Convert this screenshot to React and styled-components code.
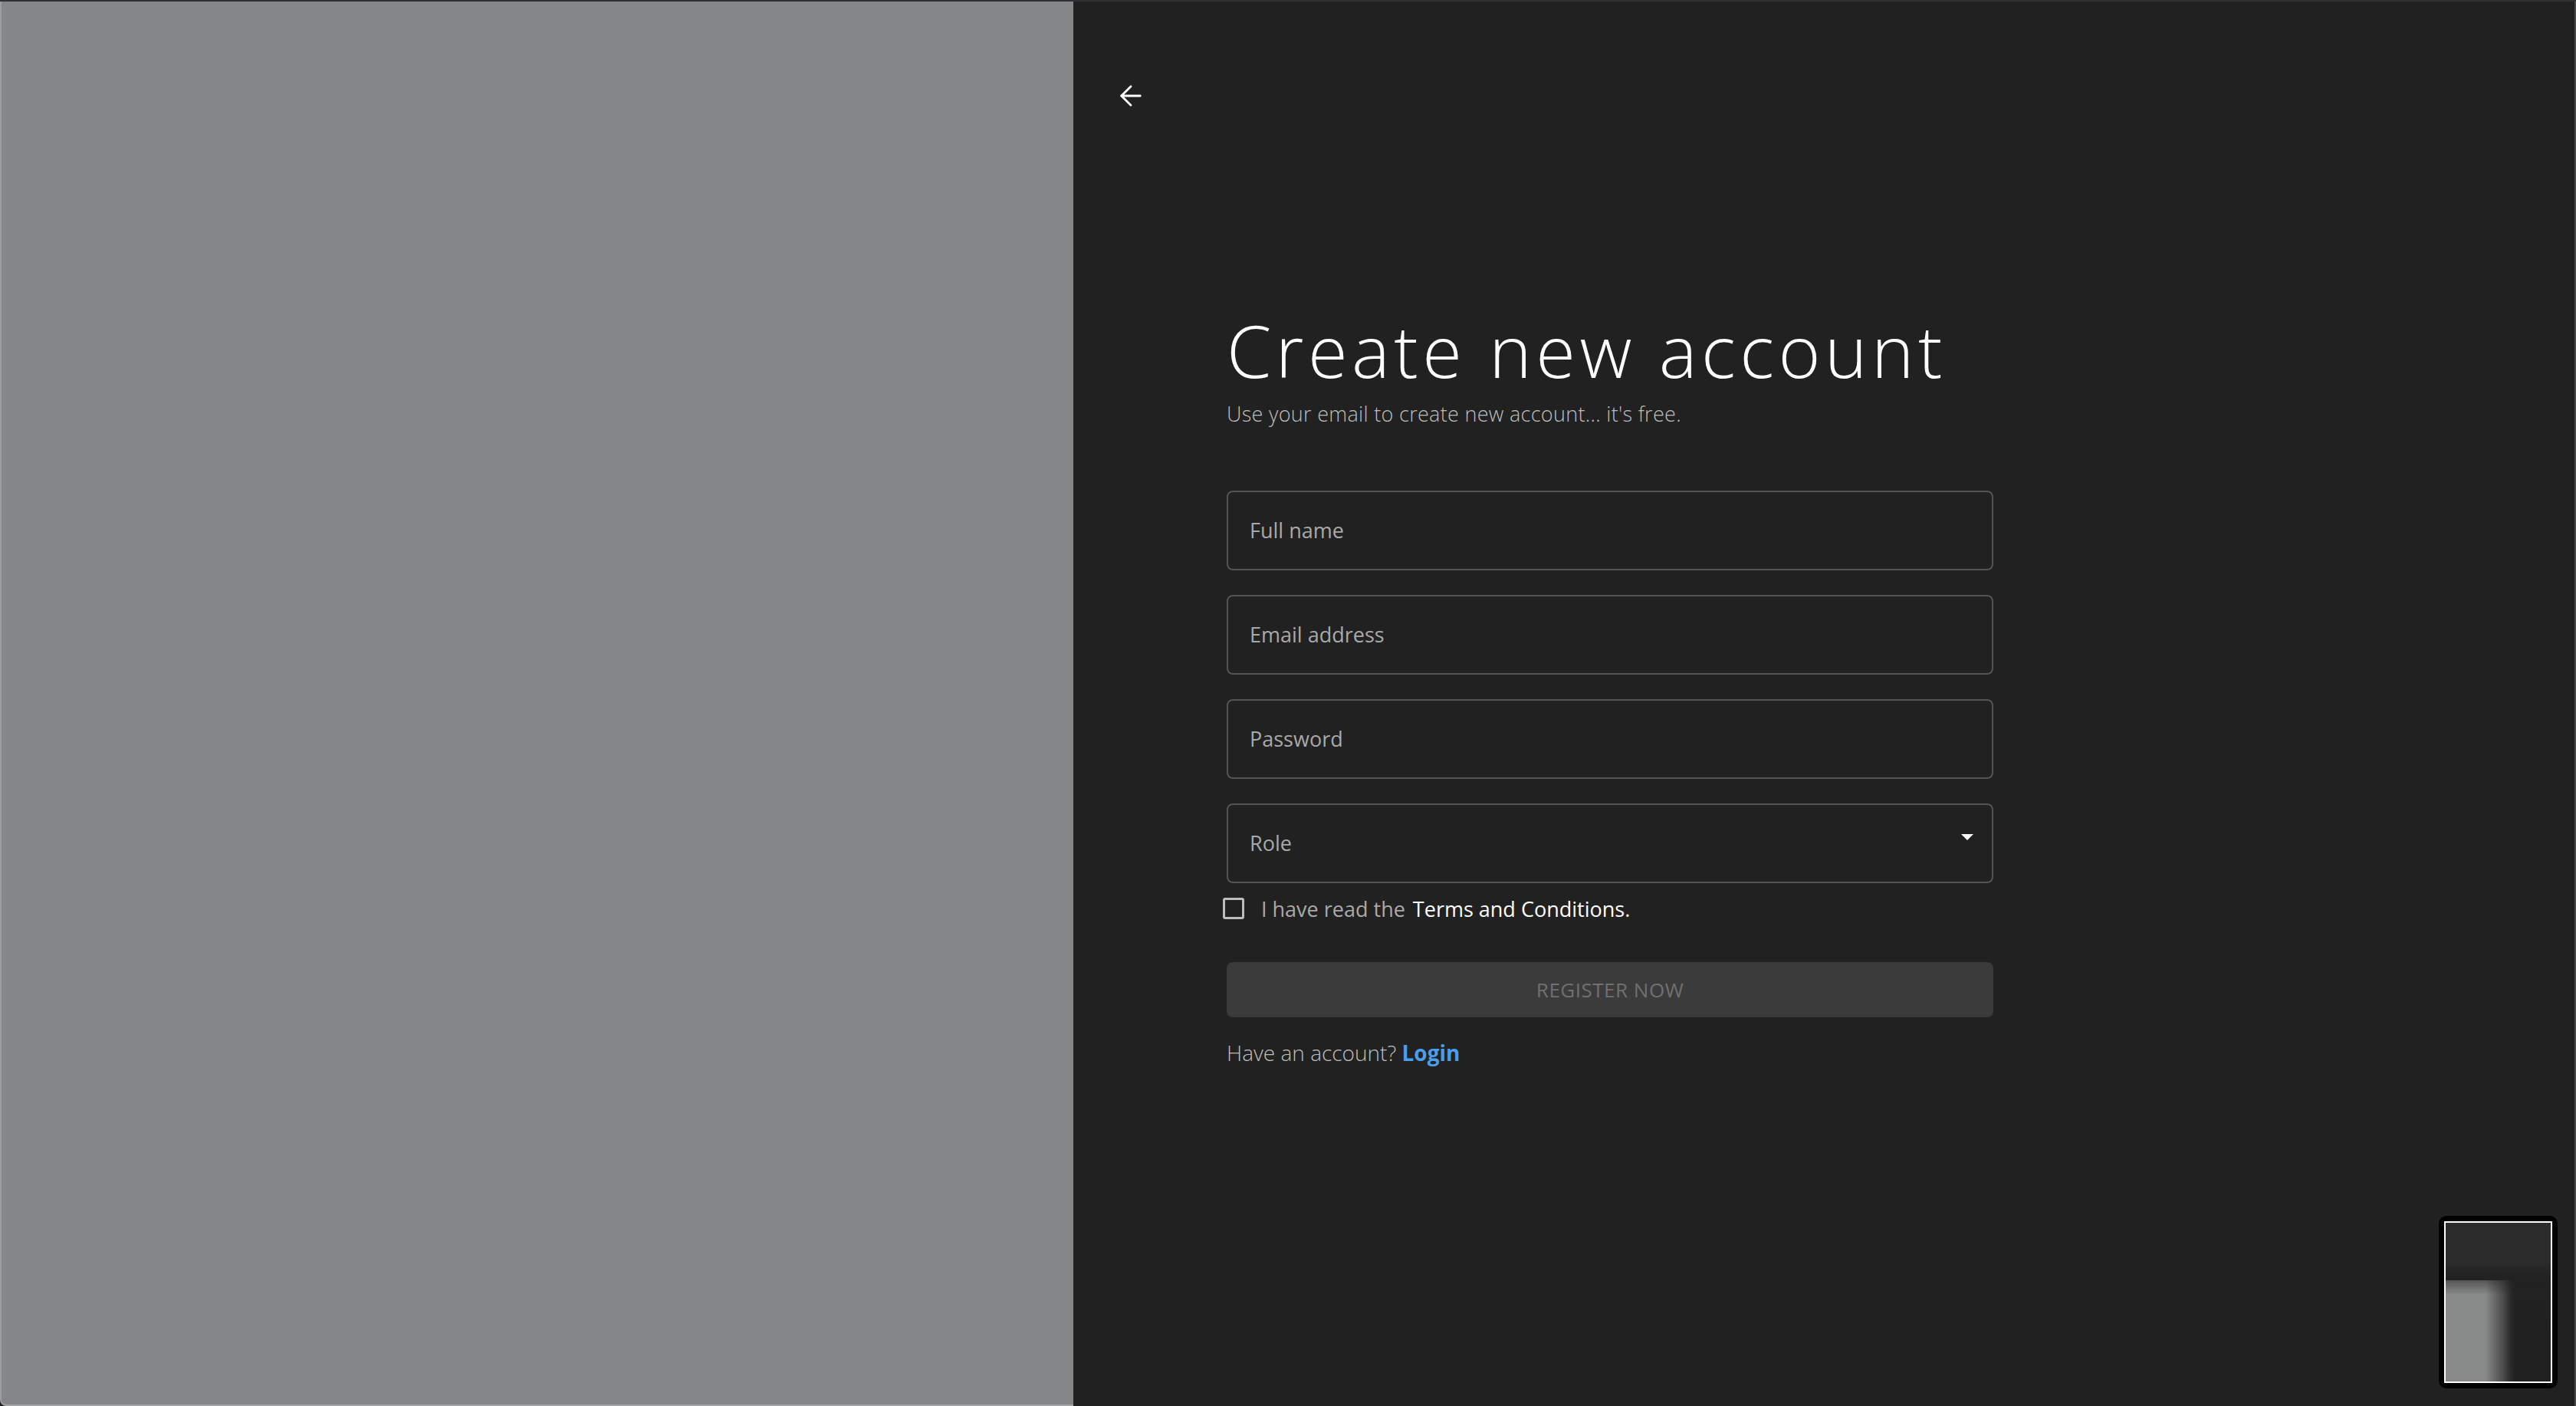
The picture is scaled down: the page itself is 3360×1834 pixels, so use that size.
import React, { useState } from 'react';
import styled, { createGlobalStyle } from 'styled-components';
import { ArrowLeft } from 'lucide-react';

const GlobalStyle = createGlobalStyle`
  html, body, #root {
    margin: 0;
    height: 100%;
  }
  body {
    background: #212121;
    font-family: "Open Sans", "Noto Sans", sans-serif;
  }
  * { box-sizing: border-box; }
`;

const Screen = styled.div`
  display: grid;
  grid-template-columns: 1400px 1fr;
  height: 100vh;
  border-top: 2px solid #2f3033;
  overflow: hidden;
`;

const ImagePanel = styled.div`
  background: #858688;
  border-left: 2px solid #9c9d9f;
  border-bottom: 2px solid #a3a4a6;
  border-bottom-left-radius: 8px;
`;

const FormPanel = styled.div`
  position: relative;
  background: #212121;
  border-right: 2px solid #4a4a4a;
  display: flex;
  flex-direction: column;
`;

const BackButton = styled.button`
  align-self: flex-start;
  margin: 102px 0 0 54px;
  padding: 0;
  background: none;
  border: none;
  color: #ffffff;
  display: flex;
  cursor: pointer;
`;

const FormColumn = styled.div`
  width: 1000px;
  margin: 257px 0 0 200px;
  display: flex;
  flex-direction: column;
`;

const Title = styled.h1`
  margin: 0;
  font-weight: 300;
  font-size: 94px;
  line-height: 1.17;
  color: #ffffff;
  letter-spacing: 5.5px;
`;

const Subtitle = styled.p`
  margin: 8px 0 0;
  font-size: 27px;
  font-weight: 300;
  color: #bdbdbd;
  letter-spacing: 0.3px;
`;

const Fields = styled.div`
  margin-top: 82px;
  display: flex;
  flex-direction: column;
  gap: 32px;
`;

const Field = styled.input`
  height: 104px;
  width: 100%;
  padding: 0 28px;
  background: transparent;
  border: 2px solid #545454;
  border-radius: 8px;
  font-family: inherit;
  font-size: 27px;
  color: #ffffff;
  outline: none;

  &::placeholder {
    color: #a9a9a9;
  }
`;

const SelectBox = styled.div`
  position: relative;
  height: 104px;
  display: flex;
  align-items: center;
  padding: 0 28px;
  border: 2px solid #545454;
  border-radius: 8px;
  font-size: 27px;
  color: #a9a9a9;
`;

const Caret = styled.span`
  position: absolute;
  right: 24px;
  top: 38px;
  width: 0;
  height: 0;
  border-left: 8px solid transparent;
  border-right: 8px solid transparent;
  border-top: 8px solid #ffffff;
`;

const TermsRow = styled.label`
  margin: 15px 0 0 -5px;
  display: flex;
  align-items: center;
  font-size: 27px;
  color: #a9a9a9;
  cursor: pointer;
`;

const Box = styled.span`
  width: 28px;
  height: 28px;
  border: 3px solid ${props => (props.checked ? '#4a9eea' : '#bdbdbd')};
  background: ${props => (props.checked ? '#4a9eea' : 'transparent')};
  border-radius: 3px;
  margin-right: 22px;
`;

const TermsLink = styled.span`
  color: #ffffff;
  margin-left: 10px;
`;

const RegisterButton = styled.button`
  margin-top: 51px;
  height: 72px;
  border: none;
  border-radius: 8px;
  background: #3b3b3b;
  color: #707070;
  font-family: inherit;
  font-size: 26px;
  text-transform: uppercase;
  letter-spacing: 0.5px;
`;

const LoginLine = styled.p`
  margin: 27px 0 0;
  font-size: 28px;
  font-weight: 300;
  color: #bdbdbd;
`;

const LoginLink = styled.a`
  color: #4a9eea;
  font-weight: 700;
  text-decoration: none;
`;

const Preview = styled.div`
  position: absolute;
  right: 22px;
  bottom: 23px;
  width: 155px;
  height: 225px;
  padding: 7px;
  background: #000000;
  border-radius: 10px;
`;

const PreviewShot = styled.div`
  width: 100%;
  height: 100%;
  border: 2px solid #ffffff;
  background:
    linear-gradient(to bottom, rgba(33,33,33,0.5) 0%, rgba(33,33,33,0) 14%),
    linear-gradient(to right, #888989 0%, #888989 38%, #4a4a4a 55%, #2a2a2a 62%, rgba(33,33,33,0) 66%),
    linear-gradient(to bottom, #2c2c2c 0%, #2c2c2c 25%, #222222 32%, #212121 100%);
  background-size: 100% 64%, 100% 64%, 100% 100%;
  background-position: 0 100%, 0 100%, 0 0;
  background-repeat: no-repeat;
`;

export default function App() {
  const [agreed, setAgreed] = useState(false);

  return (
    <>
      <GlobalStyle />
      <Screen>
        <ImagePanel />
        <FormPanel>
          <BackButton aria-label="Back">
            <ArrowLeft size={42} strokeWidth={1.6} />
          </BackButton>
          <FormColumn>
            <Title>Create new account</Title>
            <Subtitle>Use your email to create new account... it's free.</Subtitle>
            <Fields>
              <Field placeholder="Full name" />
              <Field placeholder="Email address" />
              <Field placeholder="Password" type="password" />
              <SelectBox>
                Role
                <Caret />
              </SelectBox>
            </Fields>
            <TermsRow onClick={() => setAgreed(!agreed)}>
              <Box checked={agreed} />
              I have read the
              <TermsLink>Terms and Conditions.</TermsLink>
            </TermsRow>
            <RegisterButton disabled>Register now</RegisterButton>
            <LoginLine>
              Have an account? <LoginLink href="#">Login</LoginLink>
            </LoginLine>
          </FormColumn>
          <Preview>
            <PreviewShot />
          </Preview>
        </FormPanel>
      </Screen>
    </>
  );
}
